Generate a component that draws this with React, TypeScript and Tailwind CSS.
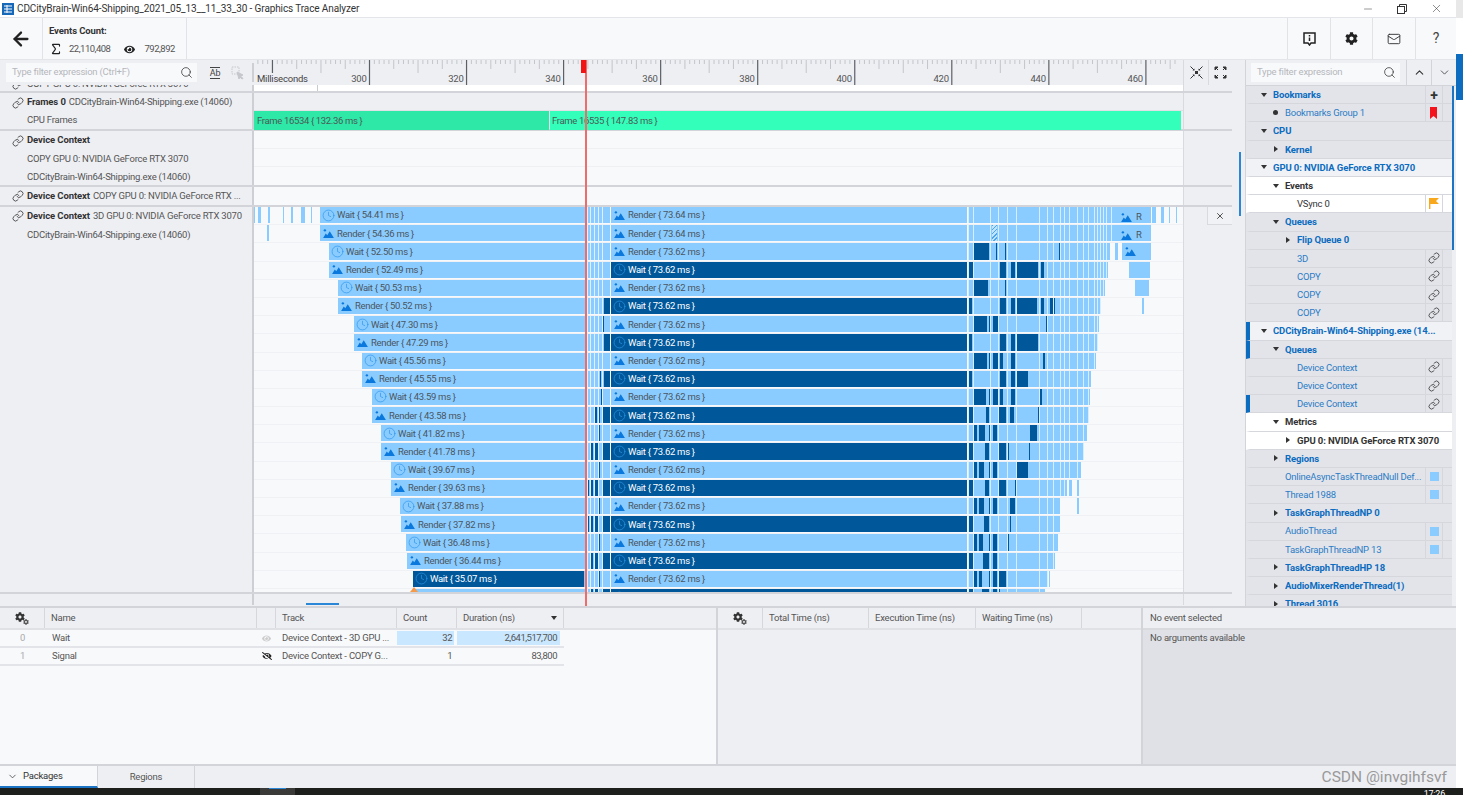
import { ArrowLeft, ChevronDown, ChevronUp, Clock, Link, Mail, Minus, Search, Sigma, X } from 'lucide-react';
import { FaCog, FaEye, FaEyeSlash } from 'react-icons/fa';

type Span = [number, number];

type ChartRow = {
  label: string;
  start: number;
  second: string;
  end: number;
  early?: Span[];
  late?: Span[];
  extra?: Span[];
};

const CHART_X = 254;
const GAP_LINES = [968, 973, 989.5, 998, 1007, 1016, 1039, 1047, 1053, 1060, 1064, 1069, 1076.5, 1083, 1087.5, 1093.5, 1097, 1100, 1103, 1106, 1111];
const EARLY_LINES = [587, 590, 594, 598, 602, 610.5];
const R64 = 'Render { 73.64 ms }';
const R62 = 'Render { 73.62 ms }';
const W62 = 'Wait { 73.62 ms }';

const rows: ChartRow[] = [
  { label: 'Wait { 54.41 ms }', start: 320, second: R64, end: 1151, extra: [[254, 255], [258, 261], [268, 270], [283, 284], [291, 293], [301, 305], [311, 312], [1152, 1156], [1161, 1164], [1169, 1170], [1176, 1177]] },
  { label: 'Render { 54.36 ms }', start: 320, second: R64, end: 1151, extra: [[267, 269]] },
  { label: 'Wait { 52.50 ms }', start: 329, second: R62, end: 1110, late: [[973.5, 989], [996, 997], [1005, 1006], [1016, 1017], [1039, 1040], [1047, 1048], [1059, 1060]], extra: [[1115, 1118], [1122, 1151]] },
  { label: 'Render { 52.49 ms }', start: 329, second: W62, end: 1108, late: [[968, 972.5], [1000, 1006], [1010.5, 1014.7], [1016, 1037.5], [1041, 1044]], extra: [[1129, 1150]] },
  { label: 'Wait { 50.53 ms }', start: 338, second: R62, end: 1105, late: [[974, 988], [1005, 1006], [1016, 1017], [1039, 1040], [1047, 1048]], extra: [[1135, 1149]] },
  { label: 'Render { 50.52 ms }', start: 338, second: W62, end: 1101, early: [[604, 610]], late: [[968, 972], [1000, 1006], [1010.5, 1014.7], [1016, 1037], [1041, 1044], [1050, 1055]], extra: [[1142, 1144]] },
  { label: 'Wait { 47.30 ms }', start: 354, second: R62, end: 1099, early: [[603, 604]], late: [[974, 987], [989, 990.5], [992.5, 997.5], [1046, 1048]] },
  { label: 'Render { 47.29 ms }', start: 354, second: W62, end: 1098, early: [[604, 610]], late: [[968, 972], [1000, 1006], [1010.5, 1014.7], [1016, 1037.5], [1047, 1048]] },
  { label: 'Wait { 45.56 ms }', start: 362, second: R62, end: 1096, early: [[602, 603]], late: [[974, 987], [989, 991], [992.5, 997.5], [1000, 1003], [1010.5, 1014.7], [1043, 1045]] },
  { label: 'Render { 45.55 ms }', start: 362, second: W62, end: 1091, early: [[600, 601], [604, 610]], late: [[968, 972], [1000, 1006], [1010.5, 1014.7], [1016, 1028]] },
  { label: 'Wait { 43.59 ms }', start: 372, second: R62, end: 1090, early: [[598, 599], [601, 602]], late: [[974, 986], [989, 991], [992.5, 997.5], [1000, 1003], [1010.5, 1014.7], [1040, 1041.5]] },
  { label: 'Render { 43.58 ms }', start: 372, second: W62, end: 1089, early: [[594.5, 597], [598, 600], [603, 610]], late: [[968, 973], [986, 989], [999, 1006], [1010, 1014], [1038, 1039]] },
  { label: 'Wait { 41.82 ms }', start: 381, second: R62, end: 1087, early: [[594, 595], [599, 600]], late: [[974, 977], [979, 985], [989, 991], [992.7, 997], [1030, 1037]] },
  { label: 'Render { 41.78 ms }', start: 381, second: W62, end: 1084, early: [[590, 592.5], [594, 598], [603, 610]], late: [[968, 973], [985, 989], [999, 1006], [1008, 1009], [1029, 1030]] },
  { label: 'Wait { 39.67 ms }', start: 391, second: R62, end: 1081, early: [[594, 595], [599, 600]], late: [[974, 977], [979, 984], [989, 991], [992.7, 997], [1016.7, 1028]] },
  { label: 'Render { 39.63 ms }', start: 391, second: W62, end: 1067, early: [[587, 588.5], [590, 592.5], [594, 598], [603, 610]], late: [[968, 973], [984.5, 989], [999, 1006], [1015, 1016]], extra: [[1069, 1072], [1077, 1079]] },
  { label: 'Wait { 37.88 ms }', start: 400, second: R62, end: 1060, early: [[590, 591], [594, 595], [599, 600]], late: [[974, 977], [979, 983.5], [989, 991], [992.7, 997], [1010, 1014.5]], extra: [[1077, 1079]] },
  { label: 'Render { 37.82 ms }', start: 401, second: W62, end: 1060, early: [[586, 588.5], [590, 592.5], [594, 598], [603, 610]], late: [[968, 973], [983.5, 989], [998, 999], [1009.5, 1011]] },
  { label: 'Wait { 36.48 ms }', start: 406, second: R62, end: 1058, early: [[590, 591], [594, 595], [599, 600]], late: [[974, 977], [979, 983], [989, 991], [992.7, 997], [998, 999], [1008, 1009]] },
  { label: 'Render { 36.44 ms }', start: 407, second: W62, end: 1055, early: [[585, 588], [590, 592.5], [594, 598], [603, 610]], late: [[968, 973], [983, 989], [992.7, 997], [998, 999], [1007, 1008]] },
  { label: 'Wait { 35.07 ms }', start: 413, second: R62, end: 1048, early: [[590, 591], [594, 595], [599, 600]], late: [[974, 977], [979, 982], [989, 991], [992.7, 997], [999, 1006]], extra: [[1049, 1050]] },
  // only the top few pixels of this row are on screen, so no text is drawn
  { label: 'Render', start: 413, second: 'Wait', end: 1045, early: [[585, 588], [590, 592.5], [594, 598], [603, 610]], late: [[968, 973], [982, 989], [992.7, 997], [999, 1000]] },
];

const tree = [
  { text: 'Bookmarks', level: 0, caret: 'down', tone: 'gray', bold: true, cell: 'plus' },
  { text: 'Bookmarks Group 1', level: 1, caret: 'dot', tone: 'gray', cell: 'bookmark' },
  { text: 'CPU', level: 0, caret: 'down', tone: 'gray', bold: true },
  { text: 'Kernel', level: 1, caret: 'right', tone: 'gray', bold: true },
  { text: 'GPU 0: NVIDIA GeForce RTX 3070', level: 0, caret: 'down', tone: 'soft', bold: true },
  { text: 'Events', level: 1, caret: 'down', tone: 'white', bold: true, dark: true },
  { text: 'VSync 0', level: 2, tone: 'white', dark: true, cell: 'flag' },
  { text: 'Queues', level: 1, caret: 'down', tone: 'gray', bold: true },
  { text: 'Flip Queue 0', level: 2, caret: 'right', tone: 'gray', bold: true },
  { text: '3D', level: 2, tone: 'gray', cell: 'link' },
  { text: 'COPY', level: 2, tone: 'gray', cell: 'link' },
  { text: 'COPY', level: 2, tone: 'gray', cell: 'link' },
  { text: 'COPY', level: 2, tone: 'gray', cell: 'link' },
  { text: 'CDCityBrain-Win64-Shipping.exe (14...', level: 0, caret: 'down', tone: 'soft', bold: true, marker: true },
  { text: 'Queues', level: 1, caret: 'down', tone: 'gray', bold: true, marker: true },
  { text: 'Device Context', level: 2, tone: 'gray', cell: 'link' },
  { text: 'Device Context', level: 2, tone: 'gray', cell: 'link' },
  { text: 'Device Context', level: 2, tone: 'gray', cell: 'link', marker: true },
  { text: 'Metrics', level: 1, caret: 'down', tone: 'white', bold: true, dark: true },
  { text: 'GPU 0: NVIDIA GeForce RTX 3070', level: 2, caret: 'right', tone: 'white', bold: true, dark: true },
  { text: 'Regions', level: 1, caret: 'right', tone: 'gray', bold: true },
  { text: 'OnlineAsyncTaskThreadNull Def...', level: 1, tone: 'gray', cell: 'swatch' },
  { text: 'Thread 1988', level: 1, tone: 'gray', cell: 'swatch' },
  { text: 'TaskGraphThreadNP 0', level: 1, caret: 'right', tone: 'gray', bold: true },
  { text: 'AudioThread', level: 1, tone: 'gray', cell: 'swatch' },
  { text: 'TaskGraphThreadNP 13', level: 1, tone: 'gray', cell: 'swatch' },
  { text: 'TaskGraphThreadHP 18', level: 1, caret: 'right', tone: 'gray', bold: true },
  { text: 'AudioMixerRenderThread(1)', level: 1, caret: 'right', tone: 'gray', bold: true },
  { text: 'Thread 3016', level: 1, caret: 'right', tone: 'gray', bold: true },
];

function RenderIcon({ className }: { className: string }) {
  return (
    <svg viewBox="0 0 12 10" className={className} fill="currentColor">
      <circle cx="2" cy="1.5" r="1.3" />
      <path d="M0 10 L3 5 L4.6 7 L7.4 2.6 L12 10 Z" />
    </svg>
  );
}

function Bar({ left, right, text, dark }: { left: number; right: number; text?: string; dark?: boolean }) {
  const isWait = text?.startsWith('Wait');
  return (
    <div
      className={`absolute top-0 bottom-px flex items-center overflow-hidden whitespace-nowrap text-[9.5px] tracking-[-0.3px] ${dark ? 'bg-[#00589b] text-white' : 'bg-[#8accff] text-[#4a5560]'}`}
      style={{ left: left - CHART_X, width: right - left }}
    >
      {text !== undefined &&
        (isWait ? (
          <Clock size={13} strokeWidth={1.2} className={`ml-[2px] shrink-0 ${dark ? 'text-[#2f97e8]' : 'text-[#2a92ea]'}`} />
        ) : (
          <RenderIcon className="ml-[3px] h-[9px] w-[11px] shrink-0 text-[#0a78dc]" />
        ))}
      {text && text.includes('{') && <span className={`pt-px ${isWait ? 'ml-[2px]' : 'ml-[3px]'}`}>{text}</span>}
    </div>
  );
}

function Marks({ spans, color }: { spans: Span[]; color: string }) {
  return (
    <>
      {spans.map(([a, b]) => (
        <div key={a} className={`absolute top-0 bottom-px ${color}`} style={{ left: a - CHART_X, width: b - a }} />
      ))}
    </>
  );
}

function ChartLine({ row, index }: { row: ChartRow; index: number }) {
  const secondDark = row.second.startsWith('Wait');
  const lines = GAP_LINES.filter((x) => x < row.end);
  return (
    <div className="relative h-[18.2px] border-b border-[#f0f1f4]">
      <Bar left={row.start} right={584} text={row.label} dark={index === 20} />
      <Bar left={584} right={610} />
      <Marks spans={row.early ?? []} color="bg-[#00589b]" />
      <Marks spans={EARLY_LINES.map((x): Span => [x, x + 0.7])} color="bg-[#dff1ff]" />
      <Bar left={611} right={967} text={row.second} dark={secondDark} />
      <Bar left={968} right={row.end} />
      <Marks spans={row.late ?? []} color="bg-[#00589b]" />
      <Marks spans={lines.map((x): Span => [x, x + 0.7])} color="bg-[#d6eeff]" />
      <Marks spans={row.extra ?? []} color="bg-[#8accff]" />
      {index < 2 && (
        <div className="absolute top-[3px] flex items-center gap-[4px] text-[9.5px] text-[#4a5560]" style={{ left: 1121 - CHART_X }}>
          <RenderIcon className="h-[9px] w-[11px] text-[#0a78dc]" />
          <span>R</span>
        </div>
      )}
      {index === 2 && (
        <div className="absolute top-[4px]" style={{ left: 1125 - CHART_X }}>
          <RenderIcon className="h-[9px] w-[11px] text-[#0a78dc]" />
        </div>
      )}
      {index === 1 && (
        <div
          className="absolute top-0 bottom-px w-[5px] bg-[repeating-linear-gradient(135deg,#4ba6ee_0px,#4ba6ee_1px,#bfe4ff_1px,#bfe4ff_3px)]"
          style={{ left: 992 - CHART_X }}
        />
      )}
    </div>
  );
}

function Ruler() {
  const ticks: { x: number; kind: number; ms: number }[] = [];
  for (let ms = 276; ms <= 466; ms++) {
    const x = 115.5 + (ms - 300) * 4.8525;
    if (x < 0 || x > 929) continue;
    ticks.push({ x, ms, kind: ms % 20 === 0 ? 3 : ms % 10 === 0 ? 2 : ms % 5 === 0 ? 1 : 0 });
  }
  const labels = [300, 320, 340, 360, 380, 400, 420, 440, 460];
  return (
    <div className="relative h-full w-[929px] overflow-hidden">
      <svg width="929" height="25" className="block">
        {ticks.map((t) => (
          <line
            key={t.x}
            x1={t.x}
            x2={t.x}
            y1={0}
            y2={t.ms === 280 ? 13 : [4, 9, 13, 25][t.kind]}
            stroke={t.kind === 3 ? '#5c6066' : '#c3c5ca'}
            strokeWidth={t.kind === 3 ? 1.2 : 1}
          />
        ))}
      </svg>
      <span className="absolute left-[3px] top-[12px] text-[9.5px] text-[#444]">Milliseconds</span>
      {labels.map((l, i) => (
        <span key={l} className="absolute top-[12px] w-[30px] text-right text-[9.5px] text-[#555]" style={{ left: 115.5 + i * 97.05 - 33 }}>
          {l}
        </span>
      ))}
    </div>
  );
}

function ExpandIcon({ inward }: { inward?: boolean }) {
  return (
    <svg width="13" height="13" viewBox="0 0 13 13" fill="#333" stroke="#333" strokeWidth="1">
      {inward ? (
        <>
          <path d="M0.5 0.5 L4 4 M12.5 0.5 L9 4 M0.5 12.5 L4 9 M12.5 12.5 L9 9" />
          <path d="M4.5 2.5 V4.5 H2.5 Z M8.5 2.5 V4.5 H10.5 Z M4.5 10.5 V8.5 H2.5 Z M8.5 10.5 V8.5 H10.5 Z" stroke="none" />
          <rect x="5" y="5" width="3" height="3" stroke="none" />
        </>
      ) : (
        <path d="M1 4 V1 H4 Z M1 1 L4 4 M12 4 V1 H9 Z M12 1 L9 4 M1 9 V12 H4 Z M1 12 L4 9 M12 9 V12 H9 Z M12 12 L9 9" />
      )}
    </svg>
  );
}

function LabelRow({ bold, text, link, indent, h = 'h-[18px]', className = '' }: { bold?: string; text?: string; link?: boolean; indent?: boolean; h?: string; className?: string }) {
  return (
    <div className={`flex items-center whitespace-nowrap text-[9.5px] text-[#555] ${h} ${indent ? 'pl-[27px]' : 'pl-[12px]'} ${className}`}>
      {link && <Link size={12} strokeWidth={1.6} className="mr-[3px] shrink-0 text-[#333]" />}
      {bold && <span className="mr-[3px] font-bold tracking-[-0.1px] text-[#333]">{bold}</span>}
      {text}
    </div>
  );
}

function SearchBox({ placeholder, className }: { placeholder: string; className: string }) {
  return (
    <div className={`flex h-[19px] items-center justify-between bg-[#f8f9fb] pl-[6px] pr-[4px] text-[9.5px] text-[#b5b7bc] ${className}`}>
      <span>{placeholder}</span>
      <Search size={13} strokeWidth={1.4} className="text-[#333]" />
    </div>
  );
}

function Track({ label, chart, h, chartBg = 'bg-[#f8f9fb]' }: { label: React.ReactNode; chart?: React.ReactNode; h: string; chartBg?: string }) {
  return (
    <div className={`flex border-b-2 border-[#d3d4d9] ${h}`}>
      <div className="w-[254px] shrink-0 overflow-hidden border-r-2 border-[#cdcfd4] bg-[#eeeff3]">{label}</div>
      <div className={`relative w-[929px] shrink-0 overflow-hidden ${chartBg}`}>{chart}</div>
      <div className="w-[49px] shrink-0 border-l border-[#d9dade] bg-[#eeeff3]" />
    </div>
  );
}

function TreeCell({ kind }: { kind?: string }) {
  if (!kind) return null;
  return (
    <>
      <div className="flex h-full w-[18px] shrink-0 items-center justify-center border-x border-[#d6d7dc]">
        {kind === 'plus' && <span className="text-[14px] font-bold leading-none text-[#333]">+</span>}
        {kind === 'link' && <Link size={12} strokeWidth={1.6} className="text-[#333]" />}
        {kind === 'swatch' && <div className="h-[9px] w-[9px] bg-[#8accff]" />}
        {kind === 'bookmark' && (
          <svg width="8" height="12" viewBox="0 0 8 12" fill="#f4121c">
            <path d="M0 0 H7 V12 L3.5 9 L0 12 Z" />
          </svg>
        )}
        {kind === 'flag' && (
          <svg width="10" height="11" viewBox="0 0 10 11" fill="#f8a81c">
            <path d="M0 0 H10 L7 3 L10 6 H1.4 V11 H0 Z" />
          </svg>
        )}
      </div>
      <div className="w-[9px] shrink-0" />
    </>
  );
}

function TreeRow({ item }: { item: (typeof tree)[number] }) {
  const bg = item.tone === 'white' ? 'bg-white' : item.tone === 'soft' ? 'bg-[#f1f2f6]' : 'bg-[#e3e4e9]';
  const pad = ['pl-[11px]', 'pl-[23px]', 'pl-[35px]'][item.level];
  const color = item.dark ? 'text-[#333]' : item.bold ? 'text-[#0b6cc0]' : 'text-[#2b7cc6]';
  return (
    <div className={`flex h-[18.2px] items-center border-b border-[#d6d7dc] border-l-[4px] ${item.marker ? 'border-l-[#0b6cc0]' : 'border-l-transparent'} ${bg}`}>
      <div className={`flex min-w-0 flex-1 items-center overflow-hidden whitespace-nowrap text-[9.5px] ${pad} ${color} ${item.bold ? 'font-bold tracking-[-0.1px]' : ''}`}>
        <span className="flex w-[12px] shrink-0 items-center">
          {item.caret === 'down' && <span className="h-0 w-0 border-x-[3.5px] border-t-[4px] border-x-transparent border-t-[#333]" />}
          {item.caret === 'right' && <span className="ml-px h-0 w-0 border-y-[3.5px] border-l-[4px] border-y-transparent border-l-[#333]" />}
          {item.caret === 'dot' && <span className="h-[5px] w-[5px] rounded-full bg-[#333]" />}
        </span>
        <span className="pt-px">{item.text}</span>
      </div>
      <TreeCell kind={item.cell} />
    </div>
  );
}

function HeadCell({ w, children, border = true }: { w: string; children?: React.ReactNode; border?: boolean }) {
  return (
    <div className={`flex h-full shrink-0 items-center px-[6px] ${w} ${border ? 'border-r border-[#d6d7dc]' : ''}`}>{children}</div>
  );
}

function Gears() {
  return (
    <div className="relative mx-auto h-[13px] w-[14px] text-[#333]">
      <FaCog size={10} />
      <FaCog size={6} className="absolute bottom-0 right-0 text-[#555]" />
    </div>
  );
}

function EventRow({ n, name, hidden, track, count, duration, bars }: { n: string; name: string; hidden?: boolean; track: string; count: string; duration: string; bars?: boolean }) {
  return (
    <div className="flex h-[18px] w-[564px] items-center border-b-2 border-[#e3e4e9] text-[9.5px] text-[#555]">
      <div className="w-[45px] text-center text-[#aaa]">{n}</div>
      <div className="w-[212px] pl-[7px]">{name}</div>
      <div className="flex w-[19px] justify-center">
        {hidden ? <FaEyeSlash size={10} className="text-[#222]" /> : <FaEye size={9} className="text-[#ccc]" />}
      </div>
      <div className="w-[121px] whitespace-nowrap pl-[6px]">{track}</div>
      <div className={`mr-[3px] h-[14px] w-[57px] pr-[2px] text-right leading-[14px] tracking-[-0.5px] ${bars ? 'bg-[#c9e7ff]' : ''}`}>{count}</div>
      <div className={`h-[14px] w-[103px] pr-[3px] text-right leading-[14px] tracking-[-0.5px] ${bars ? 'bg-[#c9e7ff]' : ''}`}>{duration}</div>
    </div>
  );
}

export default function App() {
  return (
    <div className="h-[795px] w-[1463px] overflow-hidden bg-white font-['Roboto',sans-serif] tracking-[-0.22px]">
      <div className="flex h-[788px]">
        <div className="flex w-[1456px] shrink-0 flex-col">
          {/* Title bar */}
          <div className="flex h-[18px] items-center border-b border-[#e4e5e9] bg-white">
            <svg width="12" height="12" viewBox="0 0 12 12" className="ml-[2px] mr-[3px]">
              <rect width="12" height="12" fill="#1768b8" />
              <path d="M2 3 H10 M2 6 H10 M2 9 H10 M5 2 V10" stroke="#fff" strokeWidth="1" />
            </svg>
            <span className="text-[10px] tracking-[-0.11px] text-[#333]">CDCityBrain-Win64-Shipping_2021_05_13__11_33_30 - Graphics Trace Analyzer</span>
            <div className="ml-auto flex items-center gap-[23px] pr-[13px] text-[#333]">
              <Minus size={12} strokeWidth={1} />
              <svg width="10" height="10" viewBox="0 0 10 10" fill="none" stroke="#333">
                <rect x="0.5" y="2.5" width="7" height="7" />
                <path d="M2.5 2.5 V0.5 H9.5 V7.5 H7.5" />
              </svg>
              <X size={13} strokeWidth={1} />
            </div>
          </div>

          {/* Toolbar */}
          <div className="flex h-[42px] border-b border-[#e4e5e9] bg-[#f8f9fb]">
            <div className="flex w-[43px] items-center justify-center border-r border-[#e2e3e7]">
              <ArrowLeft size={22} strokeWidth={2.5} className="text-[#222]" />
            </div>
            <div className="w-[144px] border-r border-[#e2e3e7] pl-[6px] pt-[6px] text-[9.5px] text-[#555]">
              <div className="font-bold tracking-[-0.1px] text-[#333]">Events Count:</div>
              <div className="mt-[4px] flex items-center tracking-[-0.5px]">
                <Sigma size={14} strokeWidth={2} className="text-[#222]" />
                <span className="ml-[6px]">22,110,408</span>
                <FaEye size={11} className="ml-[14px] text-[#222]" />
                <span className="ml-[9px]">792,892</span>
              </div>
            </div>
            <div className="ml-auto flex">
              <div className="flex w-[43px] items-center justify-center border-l border-[#e2e3e7]">
                <svg width="13" height="14" viewBox="0 0 13 14" fill="none" stroke="#222" strokeWidth="1.5">
                  <path d="M1 1 H12 V11 H8 L6.5 13 L5 11 H1 Z" />
                  <path d="M6.5 3 V4.4 M6.5 5.6 V9" />
                </svg>
              </div>
              <div className="flex w-[42px] items-center justify-center border-l border-[#e2e3e7]">
                <FaCog size={13} className="text-[#222]" />
              </div>
              <div className="flex w-[43px] items-center justify-center border-l border-[#e2e3e7]">
                <Mail size={14} strokeWidth={1.6} className="text-[#333]" />
              </div>
              <div className="flex w-[41px] items-center justify-center border-l border-[#e2e3e7] text-[14px] text-[#444]">?</div>
            </div>
          </div>

          {/* Timeline area */}
          <div className="flex h-[546px]">
            <div className="relative flex w-[1245px] shrink-0">
              <div className="flex w-[1232px] shrink-0 flex-col bg-[#eeeff3]">
                <div className="flex h-[25px] shrink-0 items-center bg-[#eeeff3]">
                  <div className="flex w-[254px] shrink-0 items-center border-r-2 border-[#cdcfd4]">
                    <SearchBox placeholder="Type filter expression (Ctrl+F)" className="ml-[6px] w-[191px]" />
                    <div className="ml-[7px] flex h-[19px] w-[22px] items-center justify-center bg-[#eeeff3]">
                      <span className="border-y border-[#444] text-[9px] leading-[10px] text-[#444]">Ab</span>
                    </div>
                    <svg width="14" height="14" viewBox="0 0 14 14" fill="none" stroke="#c5c7cc" className="ml-[5px]">
                      <rect x="1" y="1" width="7" height="7" strokeDasharray="1.5 1" />
                      <path d="M6 6 L12 9 L9.5 10 L12 12.5 L11 13 L8.8 11 L8 13 Z" fill="#c5c7cc" />
                    </svg>
                  </div>
                  <Ruler />
                  <div className="flex h-full w-[25px] items-center justify-center border-l border-[#d9dade]">
                    <ExpandIcon inward />
                  </div>
                  <div className="flex h-full w-[24px] items-center justify-center border-l border-[#d9dade]">
                    <ExpandIcon />
                  </div>
                </div>
                <Track
                  h="h-[8px]"
                  chartBg="bg-white"
                  label={
                    <div className="-mt-[10px]">
                      <LabelRow link text="COPY GPU 0: NVIDIA GeForce RTX 3070" />
                    </div>
                  }
                  chart={<div className="ml-[63px] h-full w-px bg-[#c9cbd0]" />}
                />
                <div className="flex h-[38px] shrink-0 border-b-2 border-[#d3d4d9]">
                  <div className="w-[254px] shrink-0 border-r-2 border-[#cdcfd4]">
                    <LabelRow link bold="Frames 0" text="CDCityBrain-Win64-Shipping.exe (14060)" className="pt-px" />
                    <LabelRow indent text="CPU Frames" className="pt-px" />
                  </div>
                  <div className="w-[929px] shrink-0">
                    <div className="h-[18px] border-b border-[#e0e1e5]" />
                    <div className="flex h-[19px] text-[9.5px] tracking-[-0.35px] text-[#4a5a55]">
                      <div className="flex w-[295px] items-center bg-[#2ee8a8] pl-[3px] pt-px">Frame 16534 {'{'} 132.36 ms {'}'}</div>
                      <div className="ml-px flex w-[631px] items-center bg-[#33ffbb] pl-[2px] pt-px">Frame 16535 {'{'} 147.83 ms {'}'}</div>
                    </div>
                  </div>
                  <div className="w-[49px] shrink-0 border-l border-[#d9dade]" />
                </div>
                <Track
                  h="h-[56px]"
                  label={
                    <>
                      <LabelRow link bold="Device Context" h="h-[19px]" />
                      <LabelRow indent text="COPY GPU 0: NVIDIA GeForce RTX 3070" />
                      <LabelRow indent text="CDCityBrain-Win64-Shipping.exe (14060)" />
                    </>
                  }
                  chart={
                    <>
                      <div className="h-[18px] border-b border-[#eff0f3]" />
                      <div className="h-[18px] border-b border-[#eff0f3]" />
                    </>
                  }
                />
                <Track h="h-[20px]" label={<LabelRow link bold="Device Context" text="COPY GPU 0: NVIDIA GeForce RTX ..." />} />
                {/* 3D GPU track */}
                <div className="flex h-[387px] shrink-0 border-b-2 border-[#d3d4d9]">
                  <div className="w-[254px] shrink-0 border-r-2 border-[#cdcfd4]">
                    <LabelRow link bold="Device Context" text="3D GPU 0: NVIDIA GeForce RTX 3070" h="h-[18px]" />
                    <LabelRow indent text="CDCityBrain-Win64-Shipping.exe (14060)" h="h-[19px]" className="pt-px" />
                  </div>
                  <div className="relative w-[929px] shrink-0 overflow-hidden bg-[#f8f9fb]">
                    {rows.map((row, i) => (
                      <ChartLine key={row.label} row={row} index={i} />
                    ))}
                    <div className="absolute bottom-0 left-[156px] h-0 w-0 border-x-[4px] border-b-[5px] border-x-transparent border-b-[#f59a4a]" />
                  </div>
                  <div className="relative w-[49px] shrink-0 border-l border-[#d9dade]">
                    <div className="ml-auto flex h-[18px] w-[25px] items-center justify-center border-b border-l border-[#d9dade] bg-[#f1f2f6]">
                      <X size={10} strokeWidth={2} className="text-[#333]" />
                    </div>
                  </div>
                </div>
                <div className="flex h-[11px] shrink-0">
                  <div className="relative w-[254px] shrink-0 border-r-2 border-[#cdcfd4]" />
                  <div className="flex w-[929px] flex-col justify-end pl-[52px]">
                    <div className="h-[2px] w-[33px] bg-[#2a86d6]" />
                  </div>
                  <div className="w-[49px] border-l border-[#d9dade]" />
                </div>
              </div>
              {/* Vertical scroll for tracks */}
              <div className="w-[13px] bg-[#eeeff3] pl-[7px] pt-[92px]">
                <div className="h-[64px] w-[2px] bg-[#2a86d6]" />
              </div>

              {/* Time cursor */}
              <div className="absolute bottom-0 left-[585px] top-0 z-10 w-[1.5px] bg-[#ee6c6c]" />
              <div className="absolute left-[581px] top-0 z-10 h-[13px] w-[5px] bg-[#f01414]" />
            </div>

            {/* Right tree panel */}
            <div className="flex w-[211px] shrink-0 flex-col border-l border-[#d3d4d9] bg-[#eeeff3]">
              <div className="flex h-[26px] shrink-0 items-center border-b border-[#d3d4d9]">
                <SearchBox placeholder="Type filter expression" className="ml-[5px] w-[149px]" />
                <div className="ml-[6px] flex h-full w-[25px] items-center justify-center border-l border-[#d3d4d9]">
                  <ChevronUp size={13} strokeWidth={2} className="text-[#333]" />
                </div>
                <div className="flex h-full flex-1 items-center justify-center border-l border-[#d3d4d9]">
                  <ChevronDown size={13} strokeWidth={1.6} className="text-[#444]" />
                </div>
              </div>
              <div className="flex min-h-0 flex-1">
                <div className="min-w-0 flex-1 overflow-hidden">
                  {tree.map((item, i) => (
                    <TreeRow key={i} item={item} />
                  ))}
                </div>
                <div className="w-[4px] shrink-0 bg-[#eeeff3]">
                  <div className="h-[164px] w-[2px] bg-[#1c74c4]" />
                </div>
              </div>
            </div>
          </div>

          {/* Bottom panels */}
          <div className="flex h-[160px] border-y-2 border-[#d3d4d9] bg-[#eeeff3]">
            <div className="w-[718px] shrink-0 border-r-2 border-[#d3d4d9] bg-[#f8f9fb]">
              <div className="flex h-[22px] items-center border-b-2 border-[#e0e1e5] bg-[#eeeff3] text-[9.5px] text-[#555]">
                <HeadCell w="w-[45px]"><Gears /></HeadCell>
                <HeadCell w="w-[212px]">Name</HeadCell>
                <HeadCell w="w-[19px]" />
                <HeadCell w="w-[121px]">Track</HeadCell>
                <HeadCell w="w-[60px]">Count</HeadCell>
                <HeadCell w="w-[107px]">
                  Duration (ns)
                  <span className="ml-auto h-0 w-0 border-x-[3.5px] border-t-[4px] border-x-transparent border-t-[#333]" />
                </HeadCell>
              </div>
              <EventRow n="0" name="Wait" track="Device Context - 3D GPU ..." count="32" duration="2,641,517,700" bars />
              <EventRow n="1" name="Signal" hidden track="Device Context - COPY G..." count="1" duration="83,800" />
            </div>
            <div className="w-[425px] shrink-0 border-r-2 border-[#d3d4d9]">
              <div className="flex h-[22px] items-center border-b-2 border-[#e0e1e5] text-[9.5px] text-[#555]">
                <HeadCell w="w-[45px]"><Gears /></HeadCell>
                <HeadCell w="w-[106px]">Total Time (ns)</HeadCell>
                <HeadCell w="w-[107px]">Execution Time (ns)</HeadCell>
                <HeadCell w="w-[106px]">Waiting Time (ns)</HeadCell>
              </div>
            </div>
            <div className="flex min-w-0 flex-1 flex-col bg-[#e0e1e6] text-[9.5px] text-[#555]">
              <div className="flex h-[22px] shrink-0 items-center border-b-2 border-[#d9dade] bg-[#eeeff3] pl-[7px]">No event selected</div>
              <div className="pl-[7px] pt-[1px]">No arguments available</div>
            </div>
          </div>

          {/* Tabs */}
          <div className="flex h-[22px] items-stretch bg-[#eeeff3] text-[9.5px] text-[#555]">
            <div className="flex w-[98px] items-center border-b-2 border-r border-[#1c74c4] border-r-[#d3d4d9] bg-[#f8f9fb] pl-[7px] text-[#333]">
              <ChevronDown size={11} strokeWidth={1.6} />
              <span className="ml-[5px]">Packages</span>
            </div>
            <div className="flex w-[97px] items-center justify-center border-r border-[#d3d4d9]">Regions</div>
            <div className="ml-auto pr-[9px] text-[15.5px] tracking-normal text-[#999]">CSDN @invgihfsvf</div>
          </div>
        </div>

        {/* Outer page scroller */}
        <div className="flex-1 bg-white">
          <div className="h-[18px] bg-[#e8e8e8]" />
          <div className="mt-[36px] h-[46px] bg-[#0b6cc0]" />
        </div>
      </div>

      {/* Desktop taskbar peeking below */}
      <div className="flex h-[7px] bg-[#1d1f1c]">
        <div className="ml-[260px] flex h-full w-[35px] justify-center bg-[#3a3b38]">
          <div className="h-px w-[17px] bg-[#2a86d6]" />
        </div>
        <span className="ml-auto pr-[18px] text-[9px] leading-[12px] text-white">17:26</span>
      </div>
    </div>
  );
}
